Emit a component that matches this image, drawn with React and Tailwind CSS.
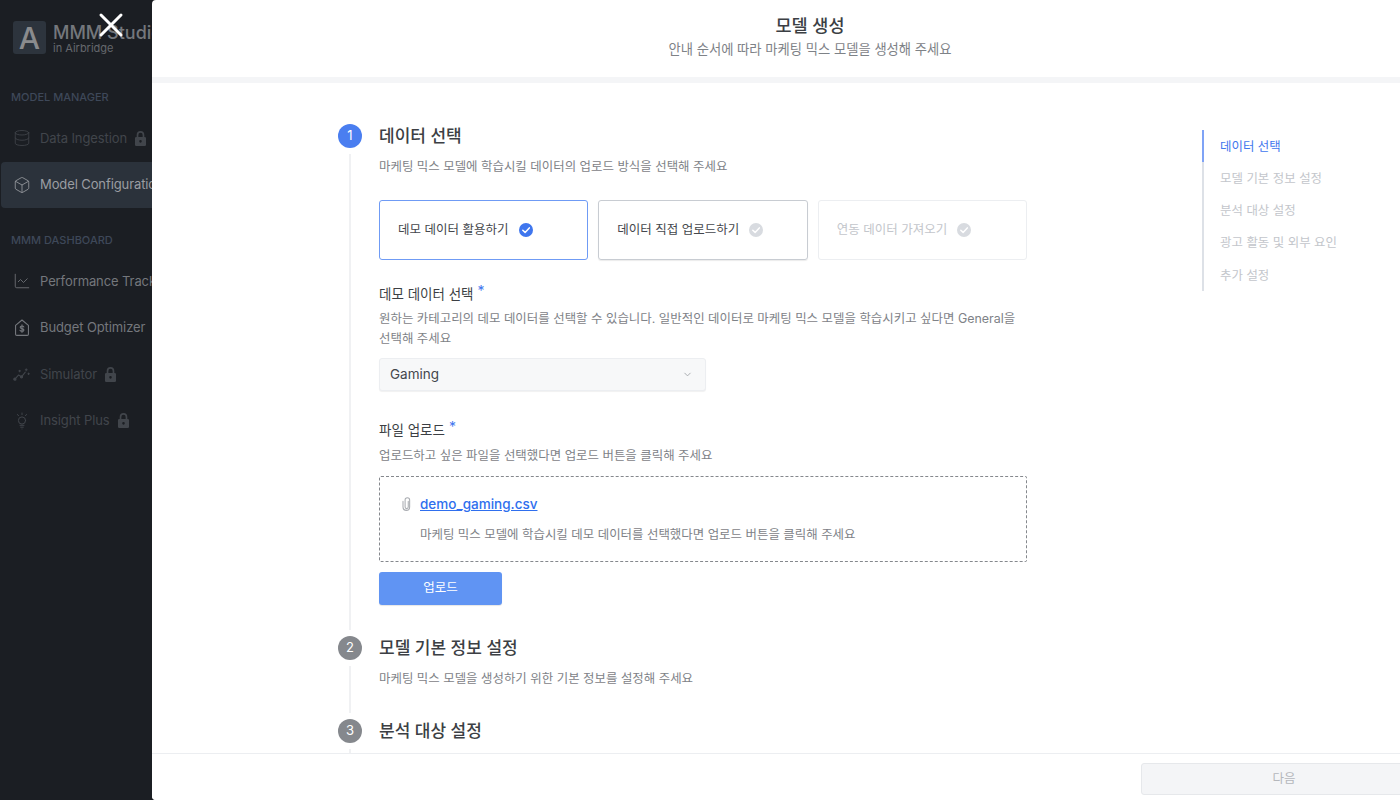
import { X, Database, Box, ChartLine, ChevronDown } from 'lucide-react';

const LockIcon = ({ className }) => (
  <svg viewBox="0 0 16 16" className={className} fill="currentColor">
    <path d="M8 1a3.600 3.600 0 0 0-3.600 3.600V6.500H4a1.200 1.200 0 0 0-1.200 1.200v6.100A1.200 1.200 0 0 0 4 15h8a1.200 1.200 0 0 0 1.200-1.200V7.700A1.200 1.200 0 0 0 12 6.500h-.4V4.600A3.600 3.600 0 0 0 8 1Zm-2 5.500V4.600a2 2 0 1 1 4 0v1.900H6Zm2 3a1.200 1.200 0 1 1 0 2.400 1.200 1.200 0 0 1 0-2.400Z" fillRule="evenodd" />
  </svg>
);

const BudgetIcon = () => (
  <svg viewBox="2 1 12 14" className="w-[16px] h-[17px] shrink-0" fill="none" stroke="currentColor" strokeWidth="0.900" strokeLinejoin="round" strokeLinecap="round">
    <path d="M2.700 6.200 8 1.800l5.300 4.400V13.500a1 1 0 0 1-1 1H3.700a1 1 0 0 1-1-1V6.200Z" />
    <path d="M9.500 7.500C9.200 6.900 8.700 6.700 8 6.700c-.9 0-1.500.4-1.500 1.100 0 1.600 3.100.7 3.100 2.300 0 .7-.7 1.100-1.600 1.100-.8 0-1.400-.3-1.700-.9M8 5.800v6.200" />
  </svg>
);

const SimulatorIcon = () => (
  <svg viewBox="0 1 18 14" className="w-[17px] h-[14px] shrink-0 -ml-[1px]" fill="none" stroke="currentColor" strokeWidth="1.100" strokeLinecap="round" strokeLinejoin="round">
    <path d="M2 13.500 6 9l3 2 4-5" />
    <circle cx="2" cy="13.500" r="1.200" fill="currentColor" />
    <circle cx="9" cy="11" r="1.200" fill="currentColor" />
    <path d="M14 2.500v2M13 3.500h2M16.500 7v1.500M15.800 7.700h1.500M7 4v1.500M6.300 4.700h1.500" />
  </svg>
);

const BulbIcon = () => (
  <svg viewBox="2 0 12 18" className="w-[16px] h-[18px] shrink-0" fill="none" stroke="currentColor" strokeWidth="1" strokeLinecap="round">
    <circle cx="8" cy="8.500" r="3.600" />
    <path d="M6 13.300h4M6.700 15.200h2.600M8 17h.01M8 1v1.600M3.500 2.500l1 1.200M12.500 2.500l-1 1.200" />
  </svg>
);

const ClipIcon = () => (
  <svg viewBox="0 0 10 16" className="w-[9px] h-[14px] shrink-0 text-[#a9acb1]" fill="none" stroke="currentColor" strokeWidth="1.200" strokeLinecap="round">
    <path d="M7 5v6.500a1.800 1.800 0 0 1-3.600 0V3.500a2.600 2.600 0 0 1 5.200 0v8a3.800 3.800 0 0 1-7.600 0V5" />
  </svg>
);

const CheckBadge = ({ className }) => (
  <svg viewBox="0 0 16 16" className={className}>
    <circle cx="8" cy="8" r="7" fill="currentColor" />
    <path d="M4.800 8.200 7.100 10.400 11.300 5.900" fill="none" stroke="white" strokeWidth="1.500" strokeLinecap="round" strokeLinejoin="round" />
  </svg>
);

function NavItem({ icon: Icon, label, locked, active, dim }) {
  const tone = active ? 'bg-[#2b323b] ml-px pl-[13px] text-[#9a9da2]' : dim ? 'pl-[14px] text-[#41454b]' : 'pl-[14px] text-[#74777c]';
  return (
    <div className={`flex items-center h-[46.500px] whitespace-nowrap rounded-[4px] ${tone}`}>
      <div className="w-[16px] flex justify-center shrink-0">
        <Icon className="w-[18px] h-[18px] shrink-0" strokeWidth={1.100} />
      </div>
      <span className="ml-[10px] text-[13px] font-normal tracking-[-0.1px]">{label}</span>
      {locked && <LockIcon className="ml-[5px] w-[17px] h-[17px] shrink-0" />}
    </div>
  );
}

function Sidebar() {
  return (
    <aside className="w-[240px] h-full bg-[#1b1e23] shrink-0">
      <div className="flex items-center pt-[21px] pl-[13px]">
        <div className="w-[33px] h-[33px] rounded-[3px] bg-[#2d343d] flex items-center justify-center text-[#8a8b8d] text-[30px] font-medium leading-none">A</div>
        <div className="ml-[7px] text-[#74777c] whitespace-nowrap">
          <div className="text-[18px] font-medium leading-[19px] pt-[1px]">MMM Studio</div>
          <div className="text-[11px] leading-[12px] text-[#65686d]">in Airbridge</div>
        </div>
      </div>
      <div className="mt-[36px] pl-[11px] text-[11px] leading-[14px] font-medium text-[#3e4859]">MODEL MANAGER</div>
      <div className="mt-[11px]">
        <NavItem icon={Database} label="Data Ingestion" locked dim />
        <NavItem icon={Box} label="Model Configuration" active />
      </div>
      <div className="mt-[25px] pl-[11px] text-[11px] leading-[14px] font-medium text-[#3e4859]">MMM DASHBOARD</div>
      <div className="mt-[11px]">
        <NavItem icon={ChartLine} label="Performance Tracker" />
        <NavItem icon={BudgetIcon} label="Budget Optimizer" />
        <NavItem icon={SimulatorIcon} label="Simulator" locked dim />
        <NavItem icon={BulbIcon} label="Insight Plus" locked dim />
      </div>
    </aside>
  );
}

function Step({ n, title, desc, active, children, className }) {
  return (
    <div className={`flex gap-[17px] ${className}`}>
      <div className="w-6 shrink-0 flex flex-col items-center">
        <div className={`w-6 h-6 rounded-full flex items-center justify-center text-white text-[13px] shrink-0 ${active ? 'bg-[#4a7ef0]' : 'bg-[#85888d]'}`}>{n}</div>
        <div className="w-[2px] flex-1 bg-[#f0f1f3] my-[6px]" />
      </div>
      <div className="flex-1 min-w-0">
        <h2 className="text-[17px] leading-[24px] font-medium text-[#3c3f44]">{title}</h2>
        {desc && <p className="mt-[9px] text-[12.450px] leading-[20px] text-[#7e8287]">{desc}</p>}
        {children}
      </div>
    </div>
  );
}

function SourceCard({ label, state }) {
  const styles = {
    selected: 'border-[#6f9bf5] text-[#44474c]',
    normal: 'border-[#c8ccd2] text-[#44474c] shadow-[0_1px_1px_rgba(0,0,0,0.08)]',
    disabled: 'border-[#eceef1] text-[#c3c6cb]',
  };
  return (
    <div className={`flex-1 h-[60px] border rounded-[3px] flex items-center pl-[18px] gap-[9px] text-[12.500px] ${styles[state]}`}>
      <span>{label}</span>
      <CheckBadge className={`w-[16px] h-[16px] ${state === 'selected' ? 'text-[#3f76ee]' : 'text-[#d8dbe0]'}`} />
    </div>
  );
}

function FieldLabel({ children }) {
  return (
    <div className="text-[13.500px] leading-[20px] text-[#3c3f44]">
      {children}
      <span className="ml-[4px] text-[#3f76ee] text-[14px] align-[3px]">*</span>
    </div>
  );
}

const tocItems = ['모델 기본 정보 설정', '분석 대상 설정', '광고 활동 및 외부 요인', '추가 설정'];

export default function App() {
  return (
    <div className="relative w-[1400px] h-[800px] overflow-hidden bg-[#1b1e23] font-['Inter','Noto_Sans_CJK_KR',sans-serif]">
      <Sidebar />

      {/* Modal sheet over the sidebar */}
      <div className="absolute left-[152px] right-0 top-0 bottom-0 bg-white rounded-l-[4px] flex flex-col overflow-hidden">
        <header className="h-[77px] shrink-0 flex flex-col items-center pt-[14px] pl-[68px]">
          <div className="text-[17.500px] leading-[24px] font-medium text-[#3c3f44]">모델 생성</div>
          <div className="mt-[1px] text-[13.300px] leading-[20px] text-[#7e8287]">안내 순서에 따라 마케팅 믹스 모델을 생성해 주세요</div>
        </header>
        <div className="h-[6px] shrink-0 bg-[#f4f5f7]" />

        <main className="flex-1 min-h-0 overflow-hidden flex pl-[186px] pt-[41px]">
          <div className="w-[689px] shrink-0">
            <Step n={1} title="데이터 선택" desc="마케팅 믹스 모델에 학습시킬 데이터의 업로드 방식을 선택해 주세요" active className="h-[512px]">
              <div className="mt-[23px] flex gap-[10px]">
                <SourceCard label="데모 데이터 활용하기" state="selected" />
                <SourceCard label="데이터 직접 업로드하기" state="normal" />
                <SourceCard label="연동 데이터 가져오기" state="disabled" />
              </div>

              <div className="mt-[21px]">
                <FieldLabel>데모 데이터 선택</FieldLabel>
                <p className="mt-[5px] text-[12.450px] leading-[20px] text-[#7e8287]">
                  원하는 카테고리의 데모 데이터를 선택할 수 있습니다. 일반적인 데이터로 마케팅 믹스 모델을 학습시키고 싶다면 General을 선택해 주세요
                </p>
                <div className="mt-[9px] w-[327px] h-[33px] rounded-[3px] border border-[#eceef1] bg-[#f7f8f9] shadow-[0_1px_1px_rgba(0,0,0,0.06)] flex items-center justify-between pl-[10px] pr-[12px] text-[13.500px] text-[#44474c]">
                  <span>Gaming</span>
                  <ChevronDown className="w-[11px] h-[11px] text-[#a3a6ab]" />
                </div>
              </div>

              <div className="mt-[26px]">
                <FieldLabel>파일 업로드</FieldLabel>
                <p className="mt-[6px] text-[12.450px] leading-[20px] text-[#7e8287]">업로드하고 싶은 파일을 선택했다면 업로드 버튼을 클릭해 주세요</p>
                <div className="mt-[10px] h-[86px] rounded-[2px] border border-dashed border-[#85888d] pl-[22px] pt-[17px]">
                  <div className="flex items-center gap-[9px]">
                    <ClipIcon />
                    <a className="text-[13.500px] leading-[20px] font-medium text-[#2f6fee] underline">demo_gaming.csv</a>
                  </div>
                  <p className="ml-[18px] mt-[11px] text-[12.450px] leading-[20px] text-[#7e8287]">마케팅 믹스 모델에 학습시킬 데모 데이터를 선택했다면 업로드 버튼을 클릭해 주세요</p>
                </div>
                <button className="mt-[10px] w-[123px] h-[33px] rounded-[3px] bg-[#6094f3] text-white text-[12.500px] shadow-[0_1px_1px_rgba(0,0,0,0.1)]">업로드</button>
              </div>
            </Step>
            <Step n={2} title="모델 기본 정보 설정" desc="마케팅 믹스 모델을 생성하기 위한 기본 정보를 설정해 주세요" className="h-[83px]" />
            <Step n={3} title="분석 대상 설정" className="h-[83px]" />
          </div>

          {/* Section outline */}
          <nav className="ml-[175px] mt-[6px] self-start w-[150px] text-[12.450px]">
            <div className="h-[32px] flex items-center pl-[16px] pt-[2px] border-l-2 border-[#7fa3f6] text-[#3f76ee]">데이터 선택</div>
            {tocItems.map((item) => (
              <div key={item} className="h-[32.250px] flex items-center pl-[16px] pt-[2px] border-l-2 border-[#dde1e7] text-[#c3c6cb]">{item}</div>
            ))}
          </nav>
        </main>

        <footer className="h-[47px] shrink-0 border-t border-[#eceef1] bg-white flex justify-end pt-[9px]">
          <button className="w-[286px] h-[32px] shrink-0 -mr-[27px] rounded-[3px] border border-[#e6e8eb] bg-[#f4f5f7] text-[12.500px] text-[#b4b7bc]">다음</button>
        </footer>
      </div>

      {/* Close button straddling the sidebar */}
      <button className="absolute left-[91px] top-[5px] text-white">
        <X size={40} strokeWidth={1.800} />
      </button>
    </div>
  );
}
